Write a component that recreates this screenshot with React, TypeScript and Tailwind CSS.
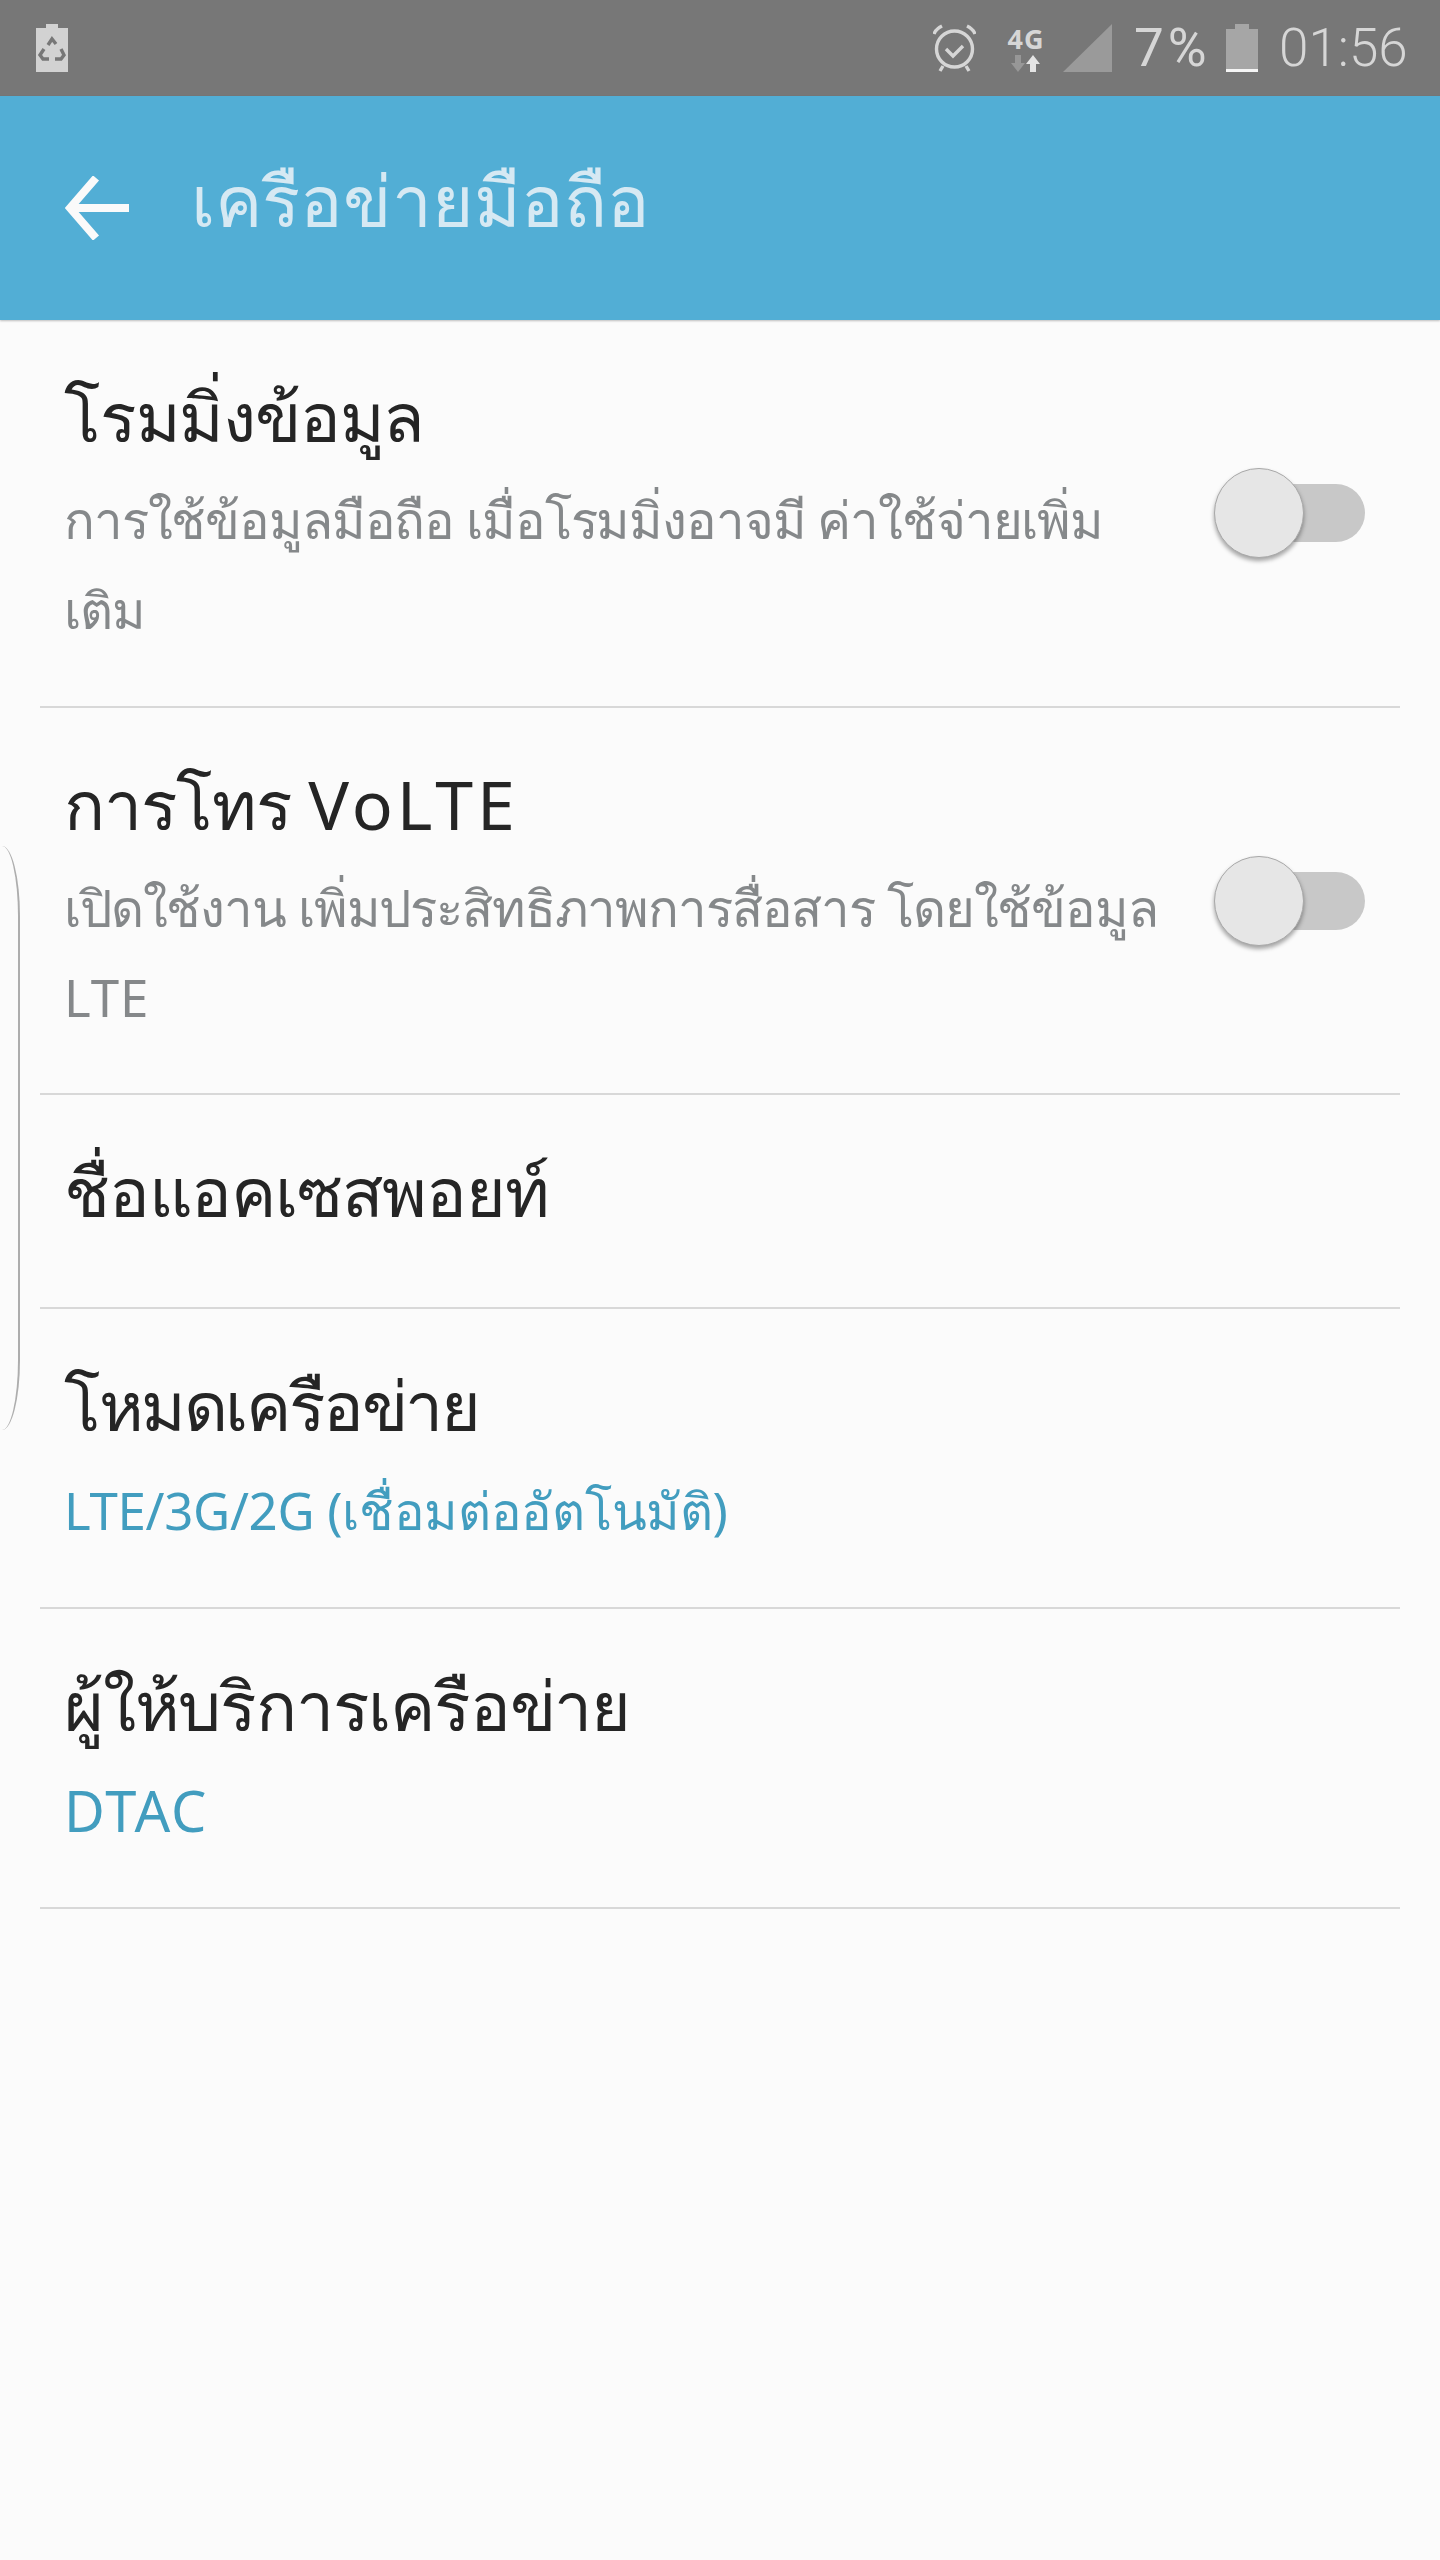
type Item = {
  title: React.ReactNode;
  sub?: React.ReactNode;
  subBlue?: boolean;
  toggle?: boolean;
  rowClass: string;
};

const items: Item[] = [
  {
    title: "โรมมิ่งข้อมูล",
    sub: (
      <>
        <span>การใช้ข้อมูลมือถือ เมื่อโรมมิ่งอาจมี ค่าใช้จ่ายเพิ่ม</span>
        <br />
        <span>เติม</span>
      </>
    ),
    toggle: true,
    rowClass: "h-[388px]",
  },
  {
    title: (
      <>
        การโทร <span className="tracking-[4px]">VoLTE</span>
      </>
    ),
    sub: (
      <>
        <span>เปิดใช้งาน เพิ่มประสิทธิภาพการสื่อสาร โดยใช้ข้อมูล</span>
        <br />
        <span className="tracking-[1px]">LTE</span>
      </>
    ),
    toggle: true,
    rowClass: "h-[387px]",
  },
  { title: "ชื่อแอคเซสพอยท์", rowClass: "h-[214px]" },
  {
    title: <span className="tracking-[-2.4px]">โหมดเครือข่าย</span>,
    sub: "LTE/3G/2G (เชื่อมต่ออัตโนมัติ)",
    subBlue: true,
    rowClass: "h-[300px]",
  },
  {
    title: "ผู้ให้บริการเครือข่าย",
    sub: <span className="tracking-[2px] text-[56px]">DTAC</span>,
    subBlue: true,
    rowClass: "h-[300px]",
  },
];

function Toggle() {
  return (
    <div className="relative w-[150px] h-[92px] shrink-0">
      <div className="absolute left-[50px] top-[16px] h-[58px] w-[101px] rounded-full bg-[#c8c8c8]" />
      <div className="absolute left-0 top-0 h-[90px] w-[90px] rounded-full bg-[#e6e6e6] border-[1.5px] border-[#a8a8a8] shadow-[0_3px_4px_rgba(0,0,0,0.35)]" />
    </div>
  );
}

function StatusBar() {
  return (
    <div className="h-[96px] bg-[#777777] flex items-center justify-between pl-[36px] pr-[33px]">
      <svg width="32" height="48" viewBox="0 0 32 48">
        <path d="M10 0h12v4h10v44H0V4h10z" fill="#d2d2d2" />
        <g fill="none" stroke="#777777" strokeWidth="3.4">
          <path d="M12 21l4-6 4 5" />
          <path d="M8 25l-4 6 3 4h6" />
          <path d="M25 25l3 6-3 4h-6" />
        </g>
      </svg>
      <div className="flex items-center text-[#d6d6d6]">
        <svg width="43" height="48" viewBox="0 0 43 48" className="mr-[31px]" fill="none" stroke="#d6d6d6" strokeWidth="3.4">
          <circle cx="21.5" cy="25" r="18" />
          <path d="M13 25l7 7 10-10" />
          <path d="M1 10c1-3 4-6 8-8M42 10c-1-3-4-6-8-8M10 42l-3 5M33 42l3 5" />
        </svg>
        <div className="w-[38px] mr-[18px] flex flex-col items-center font-['Noto_Sans',sans-serif]">
          <span className="text-[27px] leading-[28px] font-bold tracking-[1px] whitespace-nowrap">4G</span>
          <svg width="30" height="17" viewBox="0 0 30 17" className="mt-[2px]">
            <path d="M4 0h6v8h4l-7 9-7-9h4z" fill="#979797" />
            <path d="M22 0l7 9h-4v8h-6V9h-4z" fill="#e4e4e4" />
          </svg>
        </div>
        <svg width="49" height="48" viewBox="0 0 49 48" className="mr-[22px]">
          <path d="M49 0v48H0z" fill="#9a9a9a" />
        </svg>
        <span className="w-[75px] text-[53px] leading-none font-['Roboto',sans-serif] tracking-[4px] mr-[17px] whitespace-nowrap">7%</span>
        <svg width="32" height="48" viewBox="0 0 32 48" className="mr-[21px]">
          <path d="M9 0h14v5h9v43H0V5h9z" fill="#a6a6a6" />
          <rect x="0" y="45" width="32" height="3" fill="#f5f5f5" />
        </svg>
        <span className="w-[128px] text-[53px] leading-none font-['Roboto',sans-serif] font-light whitespace-nowrap">01:56</span>
      </div>
    </div>
  );
}

export default function App() {
  return (
    <div className="relative w-[1440px] h-[2560px] overflow-hidden bg-[#fbfbfb] font-['Noto_Sans','Liberation_Sans',sans-serif]">
      <StatusBar />
      <div className="h-[224px] bg-[#52aed5] flex items-center pl-[65px] pb-[12px] shadow-[0_1px_2px_rgba(0,0,0,0.25)]">
        <svg width="64" height="64" viewBox="0 0 64 64" fill="none" stroke="#fafafa" strokeWidth="8" className="mr-[62px] mt-[12px]">
          <path d="M31 2L5 32l26 30M5 32h59" />
        </svg>
        <h1 className="text-[71px] leading-none font-normal text-[#d6e9f3] -mt-[5px]">เครือข่ายมือถือ</h1>
      </div>

      <div className="px-[40px]">
        {items.map((item, i) => (
          <div key={i} className={`${item.rowClass} border-b-[2px] border-[#d8d8d8] flex pt-[54px]`}>
            <div className="flex-1 pl-[24px]">
              <div className="text-[68px] leading-[84px] tracking-[-1.2px] text-[#252525]">{item.title}</div>
              {item.sub && (
                <div className={item.subBlue ? "text-[51px] leading-[90px] tracking-[-0.3px] whitespace-nowrap text-[#429dbf] mt-[18px]" : "text-[51px] leading-[90px] tracking-[-1.15px] whitespace-nowrap text-[#85888a] mt-[16px]"}>
                  {item.sub}
                </div>
              )}
            </div>
            {item.toggle && (
              <div className="pt-[94px] pr-[36px]">
                <Toggle />
              </div>
            )}
          </div>
        ))}
      </div>

      {/* edge panel handle */}
      <div className="absolute left-[-1px] top-[846px] h-[584px] w-[21px] rounded-tr-[18px_70px] rounded-br-[18px_70px] border-r-[2px] border-[#adadad]" />
    </div>
  );
}
